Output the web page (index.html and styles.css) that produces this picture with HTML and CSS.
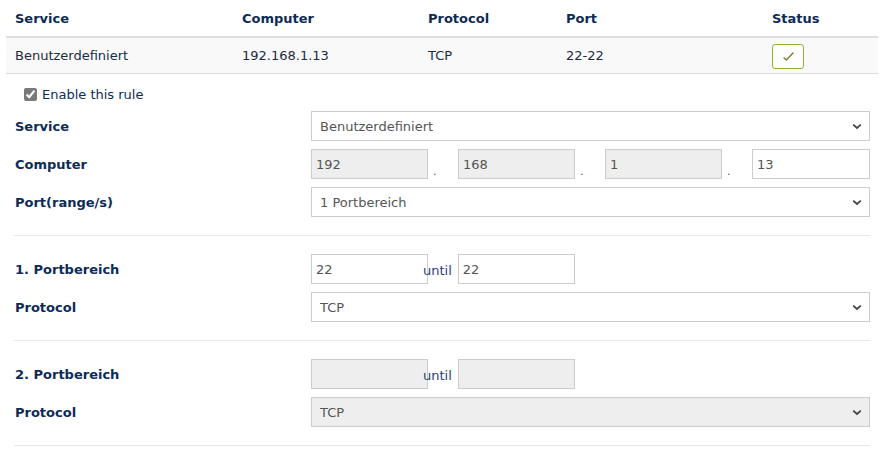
FILE: index.html
```html
<!DOCTYPE html>
<html>
<head>
<meta charset="utf-8">
<link rel="stylesheet" href="styles.css">
</head>
<body>
<div class="page">
  <div class="table">
    <div class="thead">
      <div class="th">Service</div>
      <div class="th">Computer</div>
      <div class="th">Protocol</div>
      <div class="th">Port</div>
      <div class="th">Status</div>
    </div>
    <div class="trow">
      <div class="td">Benutzerdefiniert</div>
      <div class="td">192.168.1.13</div>
      <div class="td">TCP</div>
      <div class="td">22-22</div>
      <div class="td">
        <button class="status" type="button">
          <svg width="11" height="9" viewBox="0 0 11 9"><path d="M1 6 L3.4 8 L10 1" fill="none" stroke="#7a7a2a" stroke-width="1.3" stroke-linecap="round" stroke-linejoin="round"/></svg>
        </button>
      </div>
    </div>
  </div>

  <label class="enable"><input type="checkbox" checked> Enable this rule</label>

  <div class="form">
    <div class="group">
      <div class="row">
        <div class="label">Service</div>
        <div class="ctrl">
          <div class="sel"><select><option>Benutzerdefiniert</option></select><svg class="chev" width="10" height="7" viewBox="0 0 10 7"><path d="M1.2 1.6 L5 5 L8.8 1.6" fill="none" stroke="#444" stroke-width="1.8"/></svg></div>
        </div>
      </div>
      <div class="row">
        <div class="label">Computer</div>
        <div class="ctrl ip">
          <input class="inp" type="text" value="192" disabled><span class="dot">.</span>
          <input class="inp" type="text" value="168" disabled><span class="dot">.</span>
          <input class="inp" type="text" value="1" disabled><span class="dot">.</span>
          <input class="inp last" type="text" value="13">
        </div>
      </div>
      <div class="row">
        <div class="label">Port(range/s)</div>
        <div class="ctrl">
          <div class="sel"><select><option>1 Portbereich</option></select><svg class="chev" width="10" height="7" viewBox="0 0 10 7"><path d="M1.2 1.6 L5 5 L8.8 1.6" fill="none" stroke="#444" stroke-width="1.8"/></svg></div>
        </div>
      </div>
    </div>

    <div class="group">
      <div class="row">
        <div class="label">1. Portbereich</div>
        <div class="ctrl range">
          <input class="inp" type="text" value="22"><span class="until">until</span><input class="inp" type="text" value="22">
        </div>
      </div>
      <div class="row">
        <div class="label">Protocol</div>
        <div class="ctrl">
          <div class="sel"><select><option>TCP</option></select><svg class="chev" width="10" height="7" viewBox="0 0 10 7"><path d="M1.2 1.6 L5 5 L8.8 1.6" fill="none" stroke="#444" stroke-width="1.8"/></svg></div>
        </div>
      </div>
    </div>

    <div class="group">
      <div class="row">
        <div class="label">2. Portbereich</div>
        <div class="ctrl range">
          <input class="inp" type="text" value="" disabled><span class="until">until</span><input class="inp" type="text" value="" disabled>
        </div>
      </div>
      <div class="row">
        <div class="label">Protocol</div>
        <div class="ctrl">
          <div class="sel"><select disabled><option>TCP</option></select><svg class="chev" width="10" height="7" viewBox="0 0 10 7"><path d="M1.2 1.6 L5 5 L8.8 1.6" fill="none" stroke="#444" stroke-width="1.8"/></svg></div>
        </div>
      </div>
    </div>
  </div>
</div>
</body>
</html>
```

FILE: styles.css
```css
html, body {
  margin: 0;
  padding: 0;
  background: #fff;
}
body {
  font-family: "DejaVu Sans", Verdana, sans-serif;
  font-size: 13px;
  color: #1b2a45;
}
.page {
  width: 872px;
  padding-left: 6px;
}
.table {
  width: 872px;
}
.thead, .trow {
  display: grid;
  grid-template-columns: 227px 186px 138px 206px 1fr;
  padding-left: 9px;
  align-items: center;
}
.thead {
  height: 36px;
  border-bottom: 2px solid #dddddd;
}
.th {
  font-weight: bold;
  color: #0c2b56;
}
.trow {
  height: 35px;
  background: #f9f9f9;
  border-bottom: 1px solid #dedede;
}
.td {
  color: #1b2a45;
}
.status {
  width: 32px;
  height: 25px;
  margin-top: 2px;
  border: 1px solid #8cb52a;
  border-radius: 3px;
  background: #fff;
  padding: 0;
  display: flex;
  align-items: center;
  justify-content: center;
}
.enable {
  display: flex;
  align-items: center;
  height: 20px;
  margin: 10px 0 7px 18px;
  color: #0c2b56;
}
.enable input {
  width: 13px;
  height: 13px;
  margin: 0 5px 0 0;
  accent-color: #7a7a7a;
}
.form {
  margin: 0 8px;
}
.group {
  display: flex;
  flex-direction: column;
  gap: 8px;
  padding-bottom: 18px;
  border-bottom: 1px solid #e8e8e8;
  margin-bottom: 18px;
}
.row {
  display: flex;
  align-items: center;
  height: 30px;
}
.label {
  flex: none;
  width: 297px;
  padding-left: 1px;
  box-sizing: border-box;
  font-weight: bold;
  color: #0c2b56;
}
.ctrl {
  flex: 1;
  min-width: 0;
  display: flex;
  align-items: center;
  height: 30px;
}
.sel {
  position: relative;
  flex: 1;
  height: 30px;
}
.sel select {
  appearance: none;
  -webkit-appearance: none;
  width: 100%;
  height: 30px;
  box-sizing: border-box;
  border: 1px solid #cccccc;
  border-radius: 0;
  background: #fff;
  font-family: "DejaVu Sans", Verdana, sans-serif;
  font-size: 13px;
  color: #555;
  padding: 0 8px;
  margin: 0;
  opacity: 1;
}
.sel select:disabled {
  background: #eeeeee;
  color: #555;
}
.chev {
  position: absolute;
  right: 8px;
  top: 12px;
  pointer-events: none;
}
.inp {
  flex: none;
  width: 117px;
  height: 30px;
  box-sizing: border-box;
  border: 1px solid #cccccc;
  border-radius: 0;
  background: #fff;
  font-family: "DejaVu Sans", Verdana, sans-serif;
  font-size: 13px;
  color: #555;
  padding: 0 4px;
  margin: 0;
  -webkit-text-fill-color: #555;
  opacity: 1;
}
.inp:disabled {
  background: #eeeeee;
}
.dot {
  flex: none;
  width: 30px;
  box-sizing: border-box;
  padding-left: 5px;
  align-self: flex-end;
  line-height: 14px;
  font-size: 11px;
  color: #1a5aa6;
}
.ip .last {
  flex: 1;
  width: auto;
  min-width: 0;
}
.until {
  margin: 3px 6px 0 -5px;
  color: #1f3f7d;
  position: relative;
}
```
